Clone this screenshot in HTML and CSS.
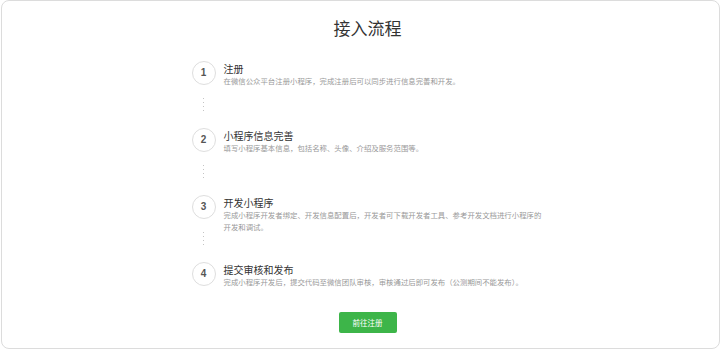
FILE: index.html
```html
<!DOCTYPE html>
<html lang="zh-CN">
<head>
    <meta charset="UTF-8">
    <title>接入流程</title>
    <link rel="stylesheet" href="styles.css">
</head>
<body>
    <div class="card">
        <h1 class="page-title">接入流程</h1>

        <ol class="steps">
            <li class="step">
                <div class="step-mark">
                    <span class="step-num">1</span>
                    <span class="step-dots"></span>
                </div>
                <div class="step-body">
                    <h2 class="step-title">注册</h2>
                    <p class="step-desc">在微信公众平台注册小程序，完成注册后可以同步进行信息完善和开发。</p>
                </div>
            </li>
            <li class="step">
                <div class="step-mark">
                    <span class="step-num">2</span>
                    <span class="step-dots"></span>
                </div>
                <div class="step-body">
                    <h2 class="step-title">小程序信息完善</h2>
                    <p class="step-desc">填写小程序基本信息，包括名称、头像、介绍及服务范围等。</p>
                </div>
            </li>
            <li class="step">
                <div class="step-mark">
                    <span class="step-num">3</span>
                    <span class="step-dots"></span>
                </div>
                <div class="step-body">
                    <h2 class="step-title">开发小程序</h2>
                    <p class="step-desc">完成小程序开发者绑定、开发信息配置后，开发者可下载开发者工具、参考开发文档进行小程序的开发和调试。</p>
                </div>
            </li>
            <li class="step last">
                <div class="step-mark">
                    <span class="step-num">4</span>
                </div>
                <div class="step-body">
                    <h2 class="step-title">提交审核和发布</h2>
                    <p class="step-desc">完成小程序开发后，提交代码至微信团队审核，审核通过后即可发布（公测期间不能发布）。</p>
                </div>
            </li>
        </ol>

        <div class="actions">
            <a href="#" class="btn-primary">前往注册</a>
        </div>
    </div>
</body>
</html>
```

FILE: styles.css
```css
body {
    margin: 0;
    background: #fff;
    font-family: "Noto Sans CJK SC", "Noto Sans", sans-serif;
    color: #333;
}
.card {
    box-sizing: border-box;
    width: 719px;
    height: 349px;
    margin-left: 1px;
    padding-left: 14px;
    border: 1px solid #dcdcdc;
    border-radius: 8px;
    background: #fff;
}
.page-title {
    margin: 15px 0 0;
    font-size: 17px;
    font-weight: normal;
    line-height: 24px;
    text-align: center;
    color: #333;
}
/* step list */
.steps {
    list-style: none;
    width: 352px;
    margin: 21px auto 0;
    padding: 0;
}
.step {
    display: flex;
    height: 67px;
}
.step.last {
    height: 40px;
}
.step-mark {
    display: flex;
    flex-direction: column;
    align-items: center;
    width: 24px;
    flex-shrink: 0;
}
.step-num {
    box-sizing: border-box;
    width: 24px;
    height: 24px;
    border: 1px solid #dedede;
    border-radius: 50%;
    font-family: "Liberation Sans", Arial, sans-serif;
    font-size: 10px;
    font-weight: bold;
    line-height: 22px;
    text-align: center;
    color: #555;
}
.step-dots {
    width: 1px;
    height: 14px;
    margin-top: 13px;
    background: repeating-linear-gradient(to bottom, #c4c4c4 0, #c4c4c4 1px, transparent 1px, transparent 4px);
}
.step-body {
    margin-left: 8px;
    padding-top: 1px;
}
.step-title {
    margin: 0;
    font-size: 10px;
    font-weight: normal;
    line-height: 13px;
    color: #333;
}
.step-desc {
    margin: 0;
    font-size: 7.4px;
    line-height: 12px;
    color: #999;
}
.actions {
    margin-top: 5px;
    text-align: center;
}
.btn-primary {
    display: inline-block;
    width: 58px;
    height: 21px;
    border-radius: 2px;
    background-color: #3db549;
    color: #fff;
    font-size: 7.5px;
    line-height: 21px;
    text-decoration: none;
}
```
